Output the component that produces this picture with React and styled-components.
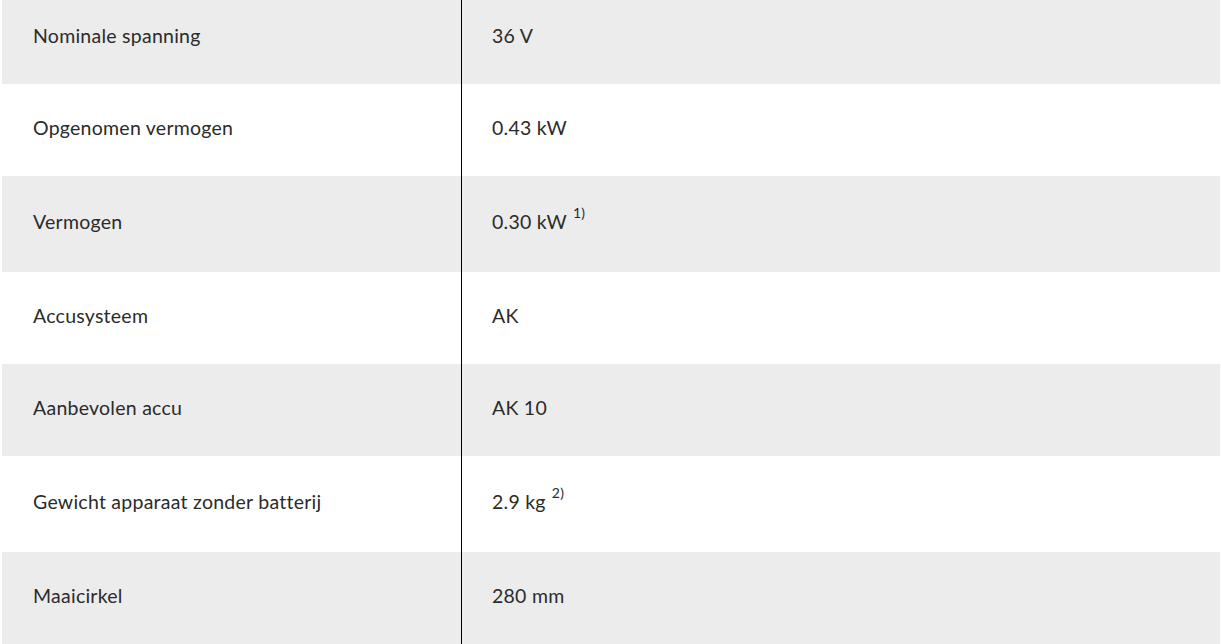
import React from 'react'
import styled, { createGlobalStyle } from 'styled-components'

const GlobalStyle = createGlobalStyle`
    body{
        margin: 0;
        background: #fff;
        font-family: Lato, "Open Sans", sans-serif;
    }
`

const specs = [
    { label: 'Nominale spanning', value: '36 V' },
    { label: 'Opgenomen vermogen', value: '0.43 kW' },
    { label: 'Vermogen', value: '0.30 kW', note: '1)' },
    { label: 'Accusysteem', value: 'AK' },
    { label: 'Aanbevolen accu', value: 'AK 10' },
    { label: 'Gewicht apparaat zonder batterij', value: '2.9 kg', note: '2)' },
    { label: 'Maaicirkel', value: '280 mm' },
]

const App = () => {
    return (
        <Wrapper>
            <GlobalStyle />
            <SpecTable>
                <tbody>
                    {specs.map((row, i) => (
                        <Row key={row.label} $striped={i % 2 === 0} $tall={!!row.note}>
                            <Label>{row.label}</Label>
                            <Value>
                                {row.value}
                                {row.note && <Note>{row.note}</Note>}
                            </Value>
                        </Row>
                    ))}
                </tbody>
            </SpecTable>
        </Wrapper>
    )
}

export default App

const Wrapper = styled.div`
    padding: 0 1px 0 2px;
    margin-top: -8px;
    height: 652px;
    overflow: hidden;
`

const SpecTable = styled.table`
    width: 100%;
    border-collapse: collapse;
    color: #2b2b2b;
    font-size: 19.5px;
    letter-spacing: 0.25px;
`

const Row = styled.tr`
    background: ${p => (p.$striped ? '#ececec' : '#fff')};
    height: ${p => (p.$tall ? '96px' : '92px')};
`

const Label = styled.td`
    width: 428px;
    padding: 0 0 5px 31px;
    border-right: 1px solid #000;
    vertical-align: middle;
    line-height: 28px;
`

const Value = styled.td`
    padding: 0 0 5px 30px;
    vertical-align: middle;
    line-height: 28px;
`

const Note = styled.sup`
    font-size: 14px;
    line-height: 0;
    margin-left: 6px;
    position: relative;
    top: -3px;
`
